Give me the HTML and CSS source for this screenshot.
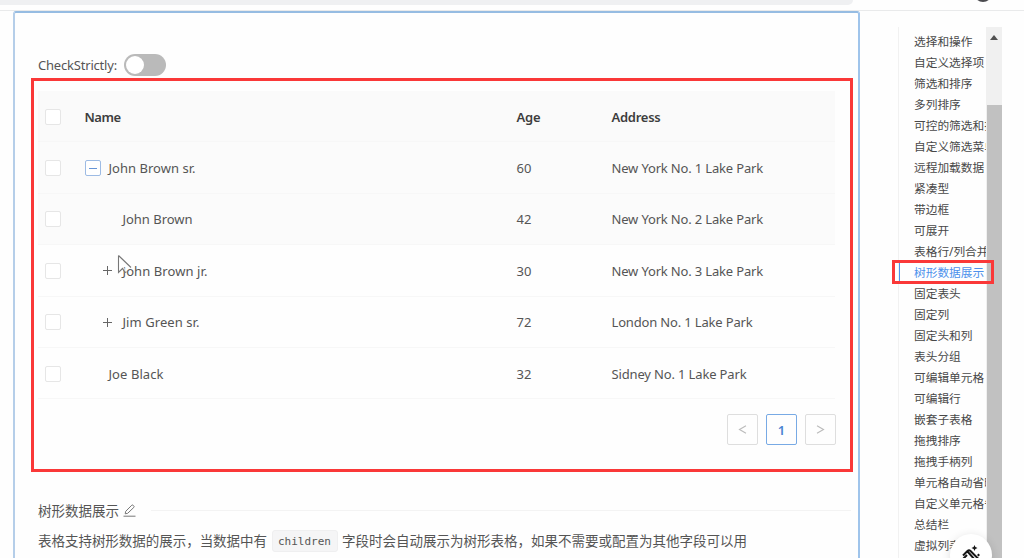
FILE: index.html
```html
<!DOCTYPE html>
<html lang="zh">
<head>
<meta charset="utf-8">
<title>Table</title>
<link rel="stylesheet" href="styles.css">
</head>
<body>
<div class="browser-bar"><span class="address"></span><span class="avatar"></span></div>
<div class="page">
<main class="demo">
  <div class="strict"><span class="strict-label"><span class="fit" data-w="79">CheckStrictly:</span></span><span class="switch"></span></div>
  <section class="frame">
    <div class="row head"><i class="check"></i><div class="name"><span class="fit" data-w="36">Name</span></div><div><span class="fit" data-w="24">Age</span></div><div><span class="fit" data-w="49">Address</span></div></div>
    <div class="row hover"><i class="check"></i><div class="name"><i class="collapse"></i><span class="fit" data-w="87">John Brown sr.</span></div><div><span class="fit" data-w="15">60</span></div><div><span class="fit" data-w="151.5">New York No. 1 Lake Park</span></div></div>
    <div class="row hover"><i class="check"></i><div class="name child"><span class="fit" data-w="70">John Brown</span></div><div><span class="fit" data-w="15">42</span></div><div><span class="fit" data-w="151.5">New York No. 2 Lake Park</span></div></div>
    <div class="row"><i class="check"></i><div class="name child"><i class="plus"></i><span class="fit" data-w="85">John Brown jr.</span></div><div><span class="fit" data-w="15">30</span></div><div><span class="fit" data-w="151.5">New York No. 3 Lake Park</span></div></div>
    <div class="row"><i class="check"></i><div class="name child"><i class="plus"></i><span class="fit" data-w="77">Jim Green sr.</span></div><div><span class="fit" data-w="15">72</span></div><div><span class="fit" data-w="141">London No. 1 Lake Park</span></div></div>
    <div class="row"><i class="check"></i><div class="name leaf"><span class="fit" data-w="55">Joe Black</span></div><div><span class="fit" data-w="15">32</span></div><div><span class="fit" data-w="135">Sidney No. 1 Lake Park</span></div></div>
    <div class="pager">
      <span class="page-item"><svg width="9" height="9" viewBox="0 0 9 9"><path d="M8 .8 1.5 4.5 8 8.2"/></svg></span>
      <span class="page-item current">1</span>
      <span class="page-item"><svg width="9" height="9" viewBox="0 0 9 9"><path d="M1 .8 7.5 4.5 1 8.2"/></svg></span>
    </div>
    <svg class="cursor" width="18" height="22" viewBox="0 0 18 22"><path d="M1.5 1.5v17l4-4 2.500 4 1.500-.7M1.500 1.500 14 13.500"/></svg>
  </section>
  <div class="title"><span>树形数据展示</span><svg width="13" height="13" viewBox="0 0 13 13"><path d="M.5 12.2h12M2.2 9.8l.5-2.5L8.8 1.2q.6-.5 1.2 0l.9.9q.5.6 0 1.2L4.7 9.3z"/></svg><i></i></div>
  <p class="desc"><span class="fit" data-w="229">表格支持树形数据的展示，当数据中有</span><code><span class="fit" data-w="53">children</span></code><span class="fit" data-w="405">字段时会自动展示为树形表格，如果不需要或配置为其他字段可以用</span></p>
</main>
<aside class="toc">
  <nav>
    <a>选择和操作</a><a>自定义选择项</a><a>筛选和排序</a><a>多列排序</a><a>可控的筛选和排序</a><a>自定义筛选菜单</a><a>远程加载数据</a><a>紧凑型</a><a>带边框</a><a>可展开</a><a>表格行/列合并</a><a class="active">树形数据展示</a><a>固定表头</a><a>固定列</a><a>固定头和列</a><a>表头分组</a><a>可编辑单元格</a><a>可编辑行</a><a>嵌套子表格</a><a>拖拽排序</a><a>拖拽手柄列</a><a>单元格自动省略</a><a>自定义单元格省略</a><a>总结栏</a><a>虚拟列表</a>
  </nav>
  <div class="scroll"><i class="arrow"></i><i class="thumb"></i></div>
  <div class="marker"></div>
</aside>
</div>
<div class="theme"><svg width="20" height="20" viewBox="0 0 20 20"><path d="M1 11.500 5.500 7Q7 5.500 8.500 7l8 8M5.500 7.500l8 9M1 15l4-4"/><path class="star" d="m12.500 1 .9 2.100 2.100.9-2.100.9-.9 2.100-.9-2.100L9.500 4l2.100-.9zM16.500 9.500l1.500 1.500-1.500 1.500L15 11z"/></svg></div>
<script src="fit.js"></script>
</body>
</html>
```
FILE: fit.js
```js
document.querySelectorAll('.fit').forEach(function (el) {
  var n = Array.from(el.textContent).length;
  var w = el.getBoundingClientRect().width;
  el.style.letterSpacing = ((el.dataset.w - w) / n) + 'px';
});
```
FILE: styles.css
```css
* { box-sizing: border-box; }
body { margin: 0; width: 1024px; height: 558px; overflow: hidden; position: relative; background: #fefefe; color: #555; font: 13.5px "Noto Sans", "Noto Sans CJK SC", sans-serif; }
i { font-style: normal; flex: none; }
.fit { white-space: nowrap; }
.browser-bar { height: 11px; border-bottom: 1px solid #e9eaeb; position: relative; }
.address { display: block; width: 853px; height: 5px; background: #eff0f2; border-radius: 0 0 5px 0; }
.avatar { position: absolute; left: 974px; top: -16px; width: 18px; height: 18px; border-radius: 50%; background: #4b4b4f; }
.page { display: flex; height: 547px; }
.demo { width: 847px; margin-left: 13px; border: 2px solid #b5cee9; border-right-color: #9fc4eb; border-top-color: #96bce2; border-bottom: 0; border-radius: 3px 3px 0 0; flex: none; }
.strict { height: 65px; padding: 41px 0 0 23px; display: flex; align-items: flex-start; font-size: 13px; }
.strict-label { width: 86px; line-height: 22px; }
.switch { width: 42px; height: 22px; border-radius: 11px; background: #bababa; padding: 2px; }
.switch::before { content: ""; display: block; width: 18px; height: 18px; border-radius: 50%; background: #fff; }
.frame { width: 822px; height: 394px; margin-left: 16px; border: 3px solid #fa3838; padding: 10px 15px 0 4px; position: relative; font-size: 13px; }
.row { width: 797px; height: 51.4px; padding-top: 1px; display: grid; grid-template-columns: 46.500px 432px 95px 1fr; align-items: center; border-bottom: 1px solid #f7f7f7; }
.head { font-weight: 600; color: #3d3d3d; background: #fafafa; }
.hover { background: #fbfbfb; }
.check { width: 16px; height: 16px; border: 1px solid #e6e6e6; border-radius: 2px; background: #fff; margin-left: 7px; }
.name { display: flex; align-items: center; }
.child { padding-left: 38px; }
.leaf { padding-left: 24px; }
.collapse { width: 16px; height: 16px; border: 1px solid #9dbbe4; border-radius: 2px; background: #fff; display: grid; place-items: center; margin-right: 8px; }
.collapse::before { content: ""; width: 8px; height: 1px; background: #6695d7; }
.plus { width: 9px; height: 9px; margin: 0 11px 0 -20px; background: linear-gradient(#666, #666) center/9px 1px no-repeat, linear-gradient(#666, #666) center/1px 9px no-repeat; }
.pager { display: flex; gap: 8px; justify-content: flex-end; padding-top: 15px; margin-right: -1px; }
.page-item { width: 31px; height: 31px; border: 1px solid #dedede; border-radius: 2px; display: grid; place-items: center; }
.page-item svg { fill: none; stroke: #bbb; stroke-width: 1.100; }
.current { border-color: #78aae5; color: #4b83d2; font-weight: 600; }
.cursor { position: absolute; left: 83px; top: 173px; fill: #fff; fill-opacity: .65; stroke: #777; stroke-width: 1.100; }
.title { display: flex; align-items: center; height: 22px; margin: 27px 7px 0 23px; gap: 4px; }
.title svg { fill: none; stroke: #777; stroke-width: 1; }
.title i { flex: 1; height: 1px; background: #f3f3f3; margin-left: 11px; }
.desc { margin: 9px 0 0 23px; display: flex; align-items: center; height: 22px; line-height: 20px; }
.desc code { width: 66px; height: 22px; background: #f5f5f6; border: 1px solid #efeff0; border-radius: 3px; margin: 0 4px 0 5px; padding-left: 5px; font: 11px/21px "DejaVu Sans Mono", monospace; }
.toc { margin: 16px 0 0 38px; width: 106px; position: relative; display: flex; height: 531px; }
nav { width: 88px; border-left: 1px solid #f1f1f1; overflow: hidden; padding-top: 4px; }
nav a { display: block; height: 21px; line-height: 21px; padding-left: 15px; font-size: 11.700px; white-space: nowrap; color: #484848; }
nav .active { color: #4d91ec; border-left: 1px solid #4d91ec; padding-left: 14px; }
.scroll { width: 16px; background: #f0f0f0; padding-top: 8px; }
.arrow { display: block; margin: 0 auto; width: 0; height: 0; border: 4px solid transparent; border-top: 0; border-bottom: 5px solid #505050; }
.thumb { display: block; height: 460px; margin: 65px 0 0 1px; background: #c1c1c1; }
.marker { position: absolute; left: -6px; top: 233px; width: 102px; height: 24px; border: 3px solid #fa3838; }
.theme { position: absolute; left: 950px; top: 534px; width: 42px; height: 42px; background: #fff; border-radius: 50%; box-shadow: 0 2px 10px #0002; padding: 10px 12px; }
.theme svg { fill: none; stroke: #161616; stroke-width: 2; }
.theme .star { fill: #161616; stroke: none; }
```
